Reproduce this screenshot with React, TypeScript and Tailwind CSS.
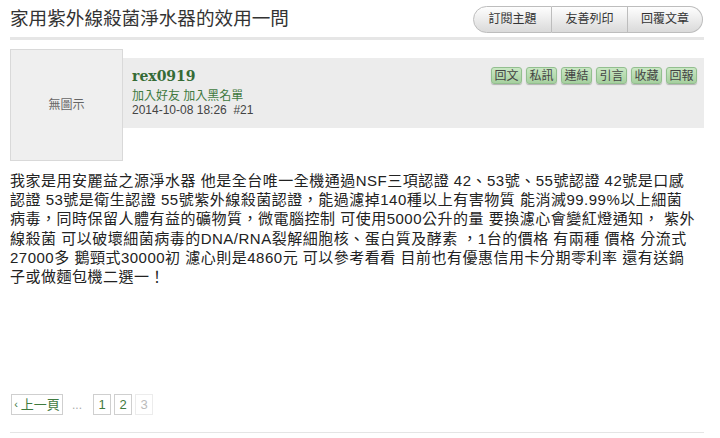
const sans = { fontFamily: '"Liberation Sans", "Noto Sans CJK TC", sans-serif' }

const topButtons = [
  { label: '訂閱主題', w: 'w-[79px]', cls: 'rounded-l-full' },
  { label: '友善列印', w: 'w-[76px]', cls: 'border-l-0' },
  { label: '回覆文章', w: 'w-[75px]', cls: 'border-l-0 rounded-r-full' },
]

const actions = ['回文', '私訊', '連結', '引言', '收藏', '回報']

// lines as they wrap in the original post
const bodyLines = [
  '我家是用安麗益之源淨水器 他是全台唯一全機通過NSF三項認證 42、53號、55號認證 42號是口感',
  '認證 53號是衛生認證 55號紫外線殺菌認證，能過濾掉140種以上有害物質 能消滅99.99%以上細菌',
  '病毒，同時保留人體有益的礦物質，微電腦控制 可使用5000公升的量 要換濾心會變紅燈通知， 紫外',
  '線殺菌 可以破壞細菌病毒的DNA/RNA裂解細胞核、蛋白質及酵素 ，1台的價格 有兩種 價格 分流式',
  '27000多 鵝頸式30000初 濾心則是4860元 可以參考看看 目前也有優惠信用卡分期零利率 還有送鍋',
  '子或做麵包機二選一！',
]

export default function App() {
  return (
    <div className="w-[720px] h-[438px] bg-white overflow-hidden text-[#333]" style={sans}>
      <div className="ml-[10px] w-[694px]">
        {/* title row */}
        <div className="flex items-center justify-between h-[37px]">
          <h1 className="text-[18.6px] leading-none pt-[2px]">家用紫外線殺菌淨水器的效用一問</h1>
          <div className="flex mr-[1px] mt-[1px]">
            {topButtons.map((b) => (
              <div
                key={b.label}
                className={`${b.w} ${b.cls} h-[27px] flex items-center justify-center text-[12px] text-[#333] border border-[#bdbdbd] bg-gradient-to-b from-[#fefefe] to-[#dadada]`}
              >
                {b.label}
              </div>
            ))}
          </div>
        </div>
        <div className="h-[3px] bg-[#e6e6e6]" />

        {/* post header */}
        <div className="flex items-start pt-[9px]">
          <div className="w-[113px] h-[112px] shrink-0 bg-[#efefef] border border-[#d9d9d9] flex items-center justify-center text-[12px] text-[#666]">
            無圖示
          </div>
          <div className="flex-1 mt-[9px] h-[70px] bg-[#ececec] flex justify-between pl-[9px] pr-[7px]">
            <div className="pt-[9px]">
              <div
                className="text-[14px] leading-[18px] font-bold text-[#356b35]"
                style={{ fontFamily: '"DejaVu Serif", serif' }}
              >
                rex0919
              </div>
              <div className="text-[12px] leading-[14px] mt-[4px] text-[#3f7a3f]">
                <span>加入好友</span> <span>加入黑名單</span>
              </div>
              <div className="text-[12px] leading-[14px] text-[#444]">2014-10-08 18:26 &nbsp;#21</div>
            </div>
            <div className="flex gap-[4px] pt-[9px]">
              {actions.map((a) => (
                <div
                  key={a}
                  className="w-[31px] h-[17px] flex items-center justify-center text-[12px] text-[#444] rounded-[3px] border border-[#93bf8f] bg-gradient-to-b from-[#c9e7c3] to-[#a6d09f] shadow-[0_1px_1px_rgba(0,0,0,0.25)]"
                >
                  {a}
                </div>
              ))}
            </div>
          </div>
        </div>

        {/* body */}
        <div className="mt-[10px] text-[15px] leading-[19.2px] tracking-[0.5px] text-[#222]">
          {bodyLines.map((l, i) => (
            <div key={i} className="whitespace-nowrap">{l}</div>
          ))}
        </div>

        {/* pagination */}
        <div className="flex items-center mt-[108px] text-[13px]">
          <div className="h-[21px] w-[52px] ml-[1px] flex items-center justify-center border border-[#cfcfcf] text-[#3f7a3f]">
            <span className="text-[11px] mr-[3px]">‹</span>上一頁
          </div>
          <span className="ml-[9px] w-[20px] text-[#aaa] text-[12px]">...</span>
          <div className="ml-[1px] flex gap-[3px]">
            <div className="w-[18px] h-[21px] flex items-center justify-center border border-[#cfcfcf] text-[#3f7a3f]">1</div>
            <div className="w-[18px] h-[21px] flex items-center justify-center border border-[#cfcfcf] text-[#3f7a3f]">2</div>
            <div className="w-[18px] h-[21px] flex items-center justify-center border border-[#ececec] text-[#bbb]">3</div>
          </div>
        </div>
        <div className="mt-[17px] h-px bg-[#e5e5e5]" />
      </div>
    </div>
  )
}
